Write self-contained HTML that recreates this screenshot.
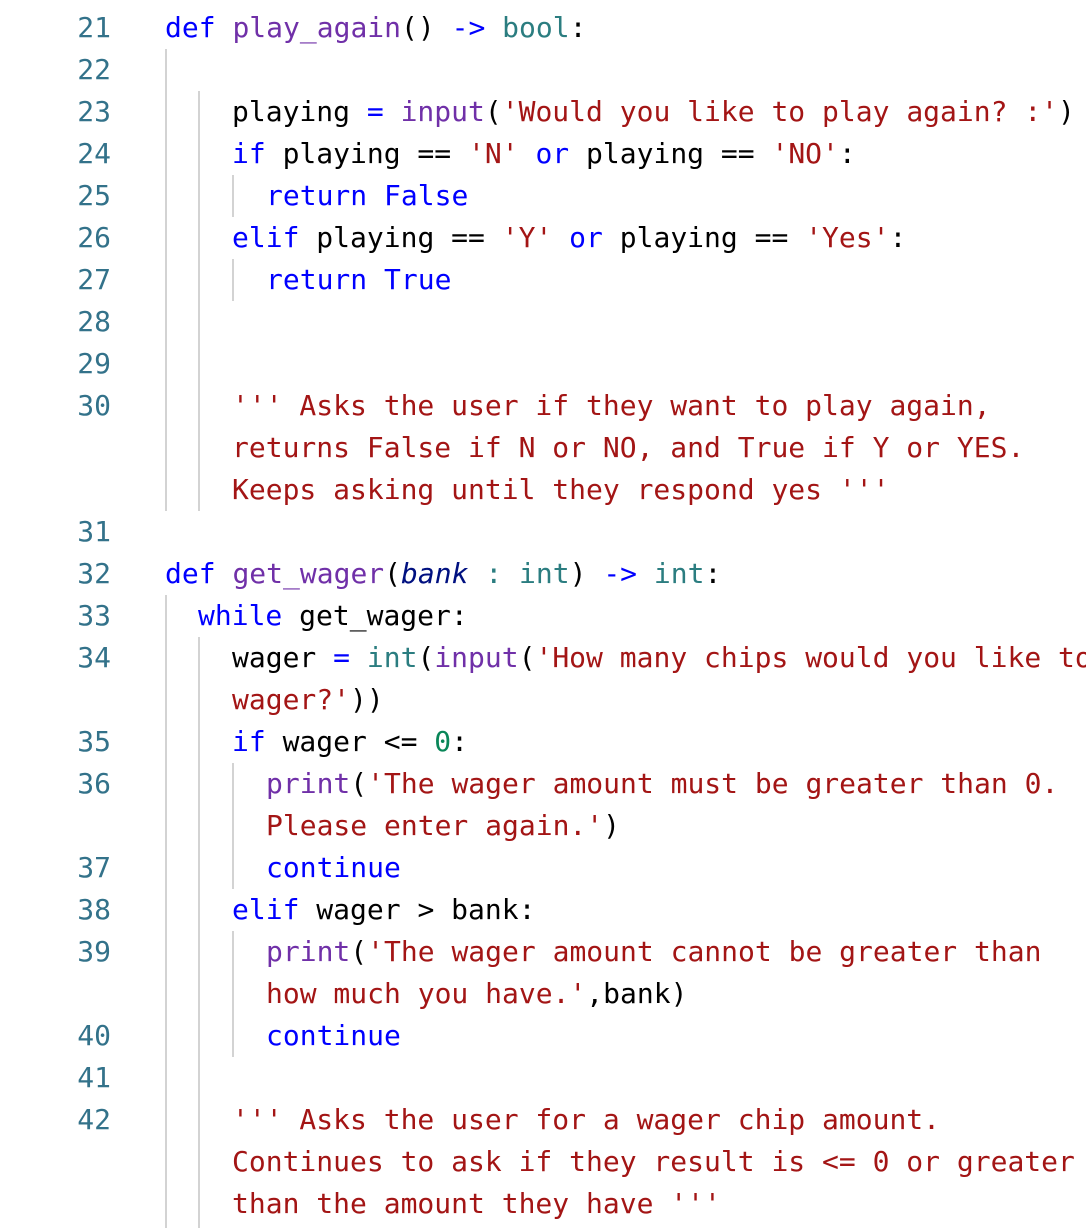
<!DOCTYPE html>
<html><head><meta charset="utf-8"><style>
html,body{margin:0;padding:0;background:#fff;width:1086px;height:1228px;overflow:hidden;position:relative}
.r{position:absolute;height:42px;line-height:42px;font-family:"DejaVu Sans Mono","Liberation Mono",monospace;font-size:28px;white-space:pre;color:#000}
.n{position:absolute;left:0;width:111px;text-align:right;height:42px;line-height:42px;font-family:"DejaVu Sans Mono","Liberation Mono",monospace;font-size:28px;color:#33728a}
.g{position:absolute;width:2px;background:#d3d3d3}
.k{color:#0000ff}.f{color:#7030a8}.s{color:#a31515}.t{color:#2b7d80}.m{color:#098658}.i{font-style:italic;color:#001080}
</style></head><body>
<div class="g" style="left:165px;top:49px;height:462px"></div>
<div class="g" style="left:198px;top:91px;height:420px"></div>
<div class="g" style="left:232px;top:175px;height:42px"></div>
<div class="g" style="left:232px;top:259px;height:42px"></div>
<div class="g" style="left:165px;top:595px;height:640px"></div>
<div class="g" style="left:198px;top:637px;height:600px"></div>
<div class="g" style="left:232px;top:763px;height:126px"></div>
<div class="g" style="left:232px;top:931px;height:126px"></div>

<div class="n" style="top:7px">21</div><div class="r" style="top:7px;left:165px"><span class="k">def</span> <span class="f">play_again</span>() <span class="k">-&gt;</span> <span class="t">bool</span>:</div>
<div class="n" style="top:49px">22</div>
<div class="n" style="top:91px">23</div><div class="r" style="top:91px;left:232px">playing <span class="k">=</span> <span class="f">input</span>(<span class="s">'Would you like to play again? :'</span>)</div>
<div class="n" style="top:133px">24</div><div class="r" style="top:133px;left:232px"><span class="k">if</span> playing == <span class="s">'N'</span> <span class="k">or</span> playing == <span class="s">'NO'</span>:</div>
<div class="n" style="top:175px">25</div><div class="r" style="top:175px;left:266px"><span class="k">return</span> <span class="k">False</span></div>
<div class="n" style="top:217px">26</div><div class="r" style="top:217px;left:232px"><span class="k">elif</span> playing == <span class="s">'Y'</span> <span class="k">or</span> playing == <span class="s">'Yes'</span>:</div>
<div class="n" style="top:259px">27</div><div class="r" style="top:259px;left:266px"><span class="k">return</span> <span class="k">True</span></div>
<div class="n" style="top:301px">28</div>
<div class="n" style="top:343px">29</div>
<div class="n" style="top:385px">30</div><div class="r s" style="top:385px;left:232px">''' Asks the user if they want to play again,</div>
<div class="r s" style="top:427px;left:232px">returns False if N or NO, and True if Y or YES.</div>
<div class="r s" style="top:469px;left:232px">Keeps asking until they respond yes '''</div>
<div class="n" style="top:511px">31</div>
<div class="n" style="top:553px">32</div><div class="r" style="top:553px;left:165px"><span class="k">def</span> <span class="f">get_wager</span>(<span class="i">bank</span> <span class="t">:</span> <span class="t">int</span>) <span class="k">-&gt;</span> <span class="t">int</span>:</div>
<div class="n" style="top:595px">33</div><div class="r" style="top:595px;left:198px"><span class="k">while</span> get_wager:</div>
<div class="n" style="top:637px">34</div><div class="r" style="top:637px;left:232px">wager <span class="k">=</span> <span class="t">int</span>(<span class="f">input</span>(<span class="s">'How many chips would you like to</span></div>
<div class="r" style="top:679px;left:232px"><span class="s">wager?'</span>))</div>
<div class="n" style="top:721px">35</div><div class="r" style="top:721px;left:232px"><span class="k">if</span> wager &lt;= <span class="m">0</span>:</div>
<div class="n" style="top:763px">36</div><div class="r" style="top:763px;left:266px"><span class="f">print</span>(<span class="s">'The wager amount must be greater than 0.</span></div>
<div class="r" style="top:805px;left:266px"><span class="s">Please enter again.'</span>)</div>
<div class="n" style="top:847px">37</div><div class="r" style="top:847px;left:266px"><span class="k">continue</span></div>
<div class="n" style="top:889px">38</div><div class="r" style="top:889px;left:232px"><span class="k">elif</span> wager &gt; bank:</div>
<div class="n" style="top:931px">39</div><div class="r" style="top:931px;left:266px"><span class="f">print</span>(<span class="s">'The wager amount cannot be greater than</span></div>
<div class="r" style="top:973px;left:266px"><span class="s">how much you have.'</span>,bank)</div>
<div class="n" style="top:1015px">40</div><div class="r" style="top:1015px;left:266px"><span class="k">continue</span></div>
<div class="n" style="top:1057px">41</div>
<div class="n" style="top:1099px">42</div><div class="r s" style="top:1099px;left:232px">''' Asks the user for a wager chip amount.</div>
<div class="r s" style="top:1141px;left:232px">Continues to ask if they result is &lt;= 0 or greater</div>
<div class="r s" style="top:1183px;left:232px">than the amount they have '''</div>
</body></html>
